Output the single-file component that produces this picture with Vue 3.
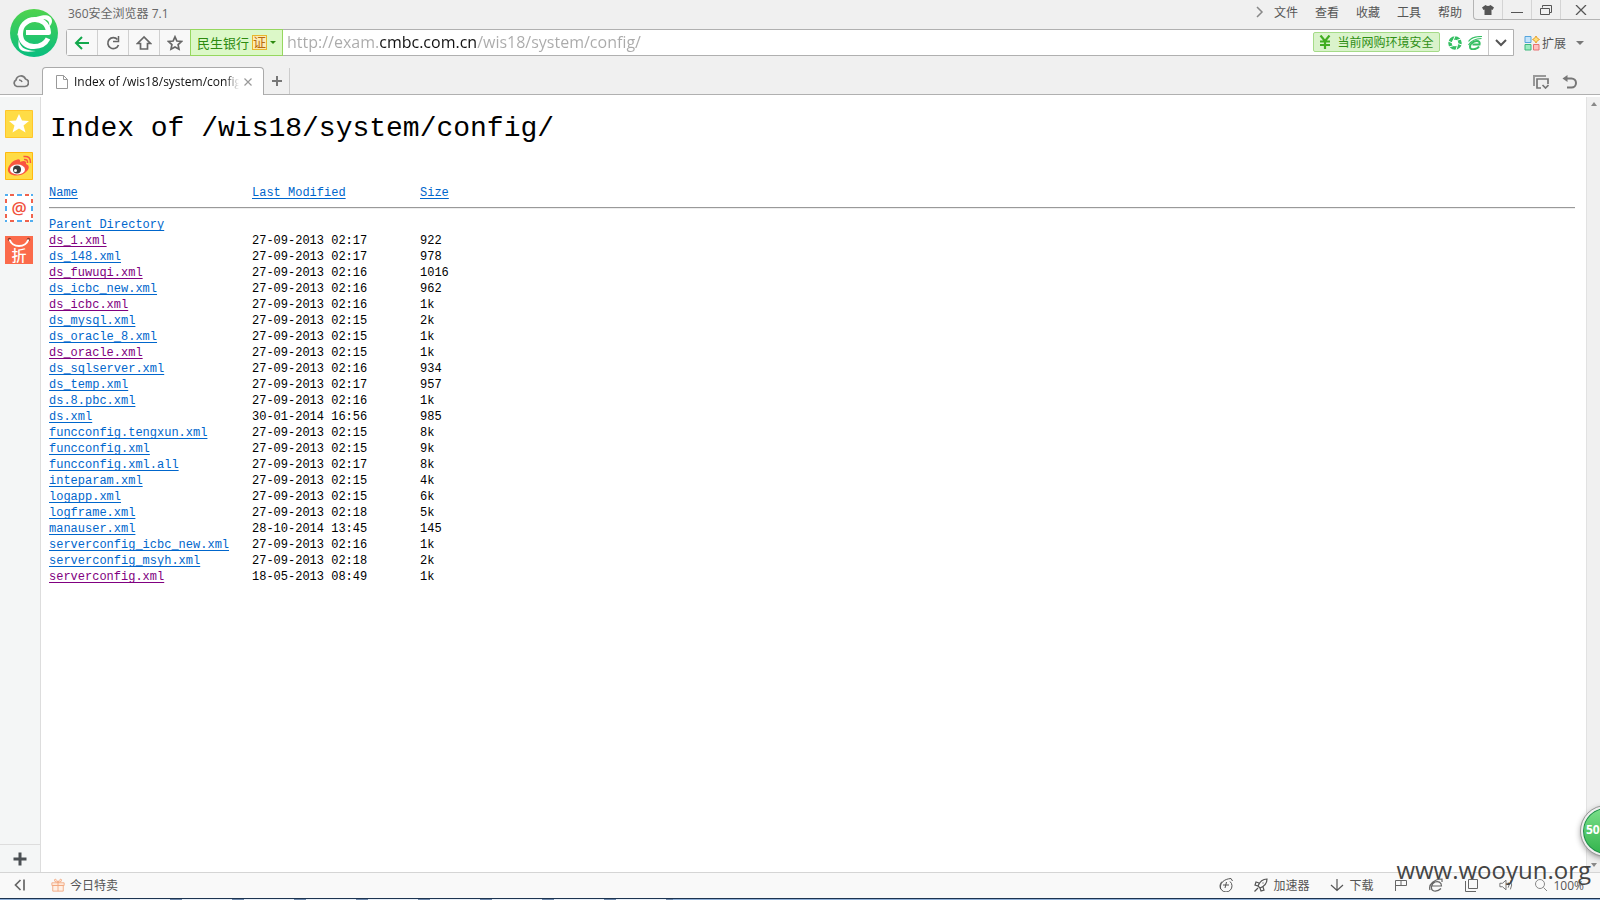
<script setup>
import { ref } from 'vue'

const url = ref('http://exam.cmbc.com.cn/wis18/system/config/')
const menus = ['文件', '查看', '收藏', '工具', '帮助']
const files = [
  ['ds_1.xml', '27-09-2013 02:17', '922', true],
  ['ds_148.xml', '27-09-2013 02:17', '978'],
  ['ds_fuwuqi.xml', '27-09-2013 02:16', '1016', true],
  ['ds_icbc_new.xml', '27-09-2013 02:16', '962'],
  ['ds_icbc.xml', '27-09-2013 02:16', '1k', true],
  ['ds_mysql.xml', '27-09-2013 02:15', '2k'],
  ['ds_oracle_8.xml', '27-09-2013 02:15', '1k'],
  ['ds_oracle.xml', '27-09-2013 02:15', '1k', true],
  ['ds_sqlserver.xml', '27-09-2013 02:16', '934'],
  ['ds_temp.xml', '27-09-2013 02:17', '957'],
  ['ds.8.pbc.xml', '27-09-2013 02:16', '1k'],
  ['ds.xml', '30-01-2014 16:56', '985'],
  ['funcconfig.tengxun.xml', '27-09-2013 02:15', '8k'],
  ['funcconfig.xml', '27-09-2013 02:15', '9k'],
  ['funcconfig.xml.all', '27-09-2013 02:17', '8k'],
  ['inteparam.xml', '27-09-2013 02:15', '4k'],
  ['logapp.xml', '27-09-2013 02:15', '6k'],
  ['logframe.xml', '27-09-2013 02:18', '5k'],
  ['manauser.xml', '28-10-2014 13:45', '145'],
  ['serverconfig_icbc_new.xml', '27-09-2013 02:16', '1k'],
  ['serverconfig_msyh.xml', '27-09-2013 02:18', '2k'],
  ['serverconfig.xml', '18-05-2013 08:49', '1k', true]
].map(([name, modified, size, visited]) => ({ name, modified, size, visited }))
</script>

<template>
  <div class="browser">
    <header class="top">
      <svg class="logo" viewBox="0 0 48 48" aria-hidden="true">
        <defs>
          <linearGradient id="lg" x1="0" y1="0" x2="0" y2="1">
            <stop offset="0" stop-color="#4fd34d" />
            <stop offset="1" stop-color="#08bd80" />
          </linearGradient>
        </defs>
        <circle cx="24" cy="24" r="24" fill="url(#lg)" />
        <path d="M16 23.500H38.500C38 14.500 31.500 10.500 25 10.500C15.500 10.500 10.500 17.500 10.500 25C10.500 33 16.500 37.500 24 37.500C30.500 37.500 35.500 34.500 38 29.500" fill="none" stroke="#fff" stroke-width="5" stroke-linejoin="round" />
        <path d="M7 27C9 17 18 9 32 6.500C37 5.500 42 7 42 12C42 14 41 16 39 18C40 13 38 10.500 33 10C24 9 14 16 7 27Z" fill="#fff" />
        <path d="M9 30C9 37 14 42 26 42C19 43 14 43 11 41C8 39 8 34 9 30Z" fill="#fff" />
      </svg>
      <div class="top-body">
        <div class="titlebar">
          <span class="app-name">360安全浏览器 7.1</span>
          <nav class="menus">
            <svg class="more" viewBox="0 0 8 12"><path d="M1 1l5 5-5 5" fill="none" stroke="#888" stroke-width="1.500" /></svg>
            <button v-for="m in menus" :key="m" type="button">{{ m }}</button>
          </nav>
          <div class="window-buttons">
            <button type="button" aria-label="皮肤"><svg viewBox="0 0 12 10"><path d="M3.500 0Q6 2 8.500 0L12 2.500L10.500 5L9.500 4.500V10H2.500V4.500L1.500 5L0 2.500Z" fill="#555" /></svg></button>
            <button type="button" aria-label="最小化"><svg viewBox="0 0 12 10"><path d="M0 7.500H12" stroke="#555" /></svg></button>
            <button type="button" aria-label="还原"><svg viewBox="0 0 12 10"><path d="M2.500 2.500V0.500H11.500V7.500H10M0.500 3.500H9.500V9.500H0.500Z" fill="none" stroke="#555" /></svg></button>
            <button type="button" aria-label="关闭" class="close"><svg viewBox="0 0 12 10"><path d="M1 0L11 10M11 0L1 10" stroke="#555" stroke-width="1.300" /></svg></button>
          </div>
        </div>
        <div class="toolbar">
          <div class="address">
            <button class="tool" type="button" aria-label="后退"><svg viewBox="0 0 16 16"><path d="M15 8H2M8 2L2 8L8 14" fill="none" stroke="#12a84c" stroke-width="2" /></svg></button>
            <button class="tool" type="button" aria-label="刷新"><svg viewBox="0 0 16 16"><path d="M12.500 4.500A5.500 5.500 0 1 0 13.500 10" fill="none" stroke="#666" stroke-width="1.700" /><path d="M13.500 1V6.500H8" fill="none" stroke="#666" stroke-width="1.500" /></svg></button>
            <button class="tool" type="button" aria-label="主页"><svg viewBox="0 0 16 16"><path d="M8 2L1.500 8.500H4.500V14H11.500V8.500H14.500Z" fill="none" stroke="#666" stroke-width="1.700" /></svg></button>
            <button class="tool last" type="button" aria-label="收藏本页"><svg viewBox="0 0 16 16"><path d="M8 1.800L9.900 6L14.500 6.500L11.100 9.600L12 14.200L8 12L4 14.200L4.900 9.600L1.500 6.500L6.100 6Z" fill="none" stroke="#666" stroke-width="1.700" /></svg></button>
            <button class="site" type="button">民生银行<span class="cert">证</span><span class="caret"></span></button>
            <input v-model="url" class="url" type="text" aria-label="地址" spellcheck="false" />
            <button class="safe" type="button">
              <svg viewBox="0 0 12 14"><path d="M1.500 0.500L6 6L10.500 0.500M1 6.500H11M1 10H11M6 6V14" fill="none" stroke="#42ad22" stroke-width="2.200" /></svg>
              当前网购环境安全
            </button>
            <button class="mode" type="button" aria-label="内核模式"><svg viewBox="0 0 14 14"><circle cx="7" cy="7" r="5" fill="none" stroke="#35bf63" stroke-width="3.500" /><path d="M7 0L5 5M13 3L8.500 4.500M14 9L9.500 7.500M8 14L9.500 9M1 11L6 9.500M0 5L4.500 7" stroke="#fff" /></svg></button>
            <button class="mode" type="button" aria-label="极速模式"><svg viewBox="0 0 14 14"><path d="M4.500 8.500H11.500C12 6 11 5 9 5C5 5 2 8 2 11C2 13.500 5 13.500 7 13C9 12.500 10.500 11.500 11 10.500" fill="none" stroke="#35bf63" stroke-width="2" /><path d="M0.500 5.500C3 1 8 0.500 14 0.500M0.500 9C4 3.500 9 2.500 13.500 2.500" fill="none" stroke="#35bf63" stroke-width="1.200" /></svg></button>
            <button class="drop" type="button" aria-label="历史地址"><svg viewBox="0 0 12 8"><path d="M1 1L6 6L11 1" fill="none" stroke="#555" stroke-width="2" /></svg></button>
          </div>
          <button class="ext" type="button">
            <svg viewBox="0 0 16 16"><path d="M1 1.500H7V7.500H1Z" fill="#c4e3fa" stroke="#55a5dc" /><path d="M1 9.500H7V15H1Z" fill="#9aebc0" stroke="#3cb77c" /><path d="M9.500 9.500H15V15H9.500Z" fill="#ffc0c0" stroke="#e57373" /><path d="M12 1L13.300 3.200L15.500 4.500L13.300 5.800L12 8L10.700 5.800L8.500 4.500L10.700 3.200Z" fill="#ffe07a" stroke="#e8a02c" /></svg>
            扩展<span class="caret"></span>
          </button>
        </div>
      </div>
    </header>

    <div class="tabs">
      <button class="cloud" type="button" aria-label="云同步"><svg viewBox="0 0 16 14"><path d="M4 12.500A3.500 3.500 0 0 1 3 6A5 5 0 0 1 12.500 5A3.800 3.800 0 0 1 12 12.500ZM6 6A3 3 0 0 1 9 8" fill="none" stroke="#777" stroke-width="1.700" /></svg></button>
      <div class="tab">
        <svg class="page-icon" viewBox="0 0 12 14"><path d="M0.500 0.500H7.500L11.500 4.500V13.500H0.500ZM7.500 0.500V4.500H11.500" fill="#fff" stroke="#999" /></svg>
        <span class="tab-title">Index of /wis18/system/config/</span>
        <button type="button" aria-label="关闭标签"><svg viewBox="0 0 8 8"><path d="M0.500 0.500L7.500 7.500M7.500 0.500L0.500 7.500" stroke="#999" stroke-width="1.200" /></svg></button>
      </div>
      <button class="new-tab" type="button" aria-label="新标签"><svg viewBox="0 0 10 10"><path d="M5 0V10M0 5H10" stroke="#777" stroke-width="2" /></svg></button>
      <div class="tab-tools">
        <button type="button" aria-label="标签列表"><svg viewBox="0 0 16 14"><path d="M1 11V1H13" fill="none" stroke="#999" stroke-width="2" /><path d="M8 13H4V4H15V9" fill="none" stroke="#777" stroke-width="1.700" /><path d="M9.500 10L12.500 13L15.500 10" fill="none" stroke="#777" stroke-width="1.700" /></svg></button>
        <button type="button" aria-label="恢复标签"><svg viewBox="0 0 16 14"><path d="M3 3.500H9.500A4.500 4.500 0 0 1 9.500 12.500H5" fill="none" stroke="#777" stroke-width="2" /><path d="M0.500 3.500L5.500 0V7Z" fill="#777" /></svg></button>
      </div>
    </div>

    <div class="middle">
      <aside class="side">
        <button type="button" aria-label="收藏夹"><svg viewBox="0 0 28 28"><path d="M0.500 0.500H27.500V27.500H0.500Z" fill="#ffdc46" stroke="#ffc62b" /><path d="M14 4L17 10.500L24 11L18.500 15.500L20.500 22.500L14 18.500L7.500 22.500L9.500 15.500L4 11L11 10.500Z" fill="#fff" /></svg></button>
        <button type="button" aria-label="微博"><svg viewBox="0 0 28 28"><path d="M0.500 0.500H27.500V27.500H0.500Z" fill="#ffdc46" stroke="#ffb90f" /><path d="M11 8C14 6 16 8 15 10C19 8 22 9 21 12C24 13 25 16 22 19C17 25 5 25 3 19C2 15 7 9 11 8Z" fill="#fa5540" /><ellipse cx="12.500" cy="17.500" rx="7.500" ry="5" fill="#fff" /><circle cx="12" cy="17.500" r="4" fill="#3c3c3c" /><circle cx="10.500" cy="18.500" r="1.500" fill="#fff" /><path d="M19 7.500Q23 7 22.500 11M18.500 4.500Q26 3.500 25.500 11" fill="none" stroke="#fa5540" stroke-width="1.500" /></svg></button>
        <button type="button" aria-label="邮箱"><svg viewBox="0 0 28 28"><path d="M0 0H28V28H0Z" fill="#fff" /><path d="M1 0V1M5 1H9M20 1H24M5 27H9M20 27H24M1 5V9M1 20V24M27 5V9M27 20V24" fill="none" stroke="#f0624c" stroke-width="2" /><path d="M0 1H3M12 1H17M26 1H28M0 27H2M12 27H17M25 27H28M1 12V17M27 12V17" fill="none" stroke="#50aef0" stroke-width="2" /><text x="14" y="20" text-anchor="middle" class="at">@</text></svg></button>
        <button type="button" aria-label="折扣"><svg viewBox="0 0 28 28"><path d="M0 0H28V28H0Z" fill="#fb6b4b" /><circle cx="4.500" cy="3.500" r="1.700" fill="#8f3523" /><circle cx="23.500" cy="3.500" r="1.700" fill="#8f3523" /><path d="M4.500 3.500Q7 10 14 10T23.500 3.500" fill="none" stroke="#fff" stroke-width="2" /><text x="14" y="25" text-anchor="middle" class="sale">折</text></svg></button>
        <button class="add" type="button" aria-label="添加"><svg viewBox="0 0 14 14"><path d="M7 0.500V13.500M0.500 7H13.500" stroke="#4b5054" stroke-width="3" /></svg></button>
      </aside>
      <main class="page">
        <h1>Index of /wis18/system/config/</h1>
        <table>
          <thead>
            <tr>
              <th class="name"><a href="#name">Name</a></th>
              <th class="date"><a href="#modified">Last Modified</a></th>
              <th><a href="#size">Size</a></th>
            </tr>
          </thead>
          <tbody>
            <tr><td colspan="3"><hr /></td></tr>
            <tr><td colspan="3"><a href="#parent">Parent Directory</a></td></tr>
            <tr v-for="f in files" :key="f.name">
              <td><a :href="'#' + f.name" :class="{ visited: f.visited }">{{ f.name }}</a></td>
              <td>{{ f.modified }}</td>
              <td>{{ f.size }}</td>
            </tr>
          </tbody>
        </table>
      </main>
      <div class="scroll"><span class="up"></span><span class="down"></span></div>
    </div>

    <footer class="status">
      <button class="collapse" type="button" aria-label="收起侧栏"><svg viewBox="0 0 12 12"><path d="M6.500 1L1.500 6L6.500 11M10 0.500V11.500" fill="none" stroke="#666" stroke-width="1.700" /></svg></button>
      <button type="button"><svg viewBox="0 0 16 16"><path d="M1 5.500H15V8.500H1ZM2 8.500H14V15H2ZM8 5.500V15M8 5Q3 4.500 4 2T8 5Q13 4.500 12 2T8 5" fill="#fff0e6" stroke="#f2a77e" /></svg>今日特卖</button>
      <div class="status-right">
        <button type="button" aria-label="加速球"><svg viewBox="0 0 14 14"><path d="M3 3.500A6 6 0 1 0 11 3.500M1.500 11C0.500 5 5 1 12 0.500L13.500 3M4 7H10M7.500 4L6 10" fill="none" stroke="#555" /></svg></button>
        <button type="button"><svg viewBox="0 0 14 14"><path d="M4 8C6 3 9 1 13 1C13 5 11 8 6 10ZM5 5L2 4L1 7L4 8M9 9L10 12L7 13L6 10M4 10L0.500 13.500M9 4.500V5.500" fill="none" stroke="#555" stroke-width="1.200" /></svg>加速器</button>
        <button type="button"><svg viewBox="0 0 14 14"><path d="M7 1V12.500M1 7L7 12.500L13 7" fill="none" stroke="#555" stroke-width="1.200" /></svg>下载</button>
        <button type="button" aria-label="标记"><svg viewBox="0 0 14 14"><path d="M1.500 13V2.500H12.500V7.500H1.500M7 2.500V7.500" fill="none" stroke="#666" /></svg></button>
        <button type="button" aria-label="浏览模式"><svg viewBox="0 0 14 14"><path d="M3 8H12.500C12.500 4 9 3 6 4C2 6 1 12 5 13C8 13.500 10 12.500 12 10.500M1 12C-1 6 6 1 13 1V4" fill="none" stroke="#666" stroke-width="1.200" /></svg></button>
        <button type="button" aria-label="窗口"><svg viewBox="0 0 14 14"><path d="M4.500 1.500H13.500V10.500H4.500ZM1.500 3V13.500H12" fill="none" stroke="#666" /></svg></button>
        <button type="button" aria-label="声音"><svg viewBox="0 0 16 14"><path d="M1 5H4L8 1.500V12.500L4 9H1ZM10.500 4Q12.500 7 10.500 10M13 2Q16 7 13 12" fill="none" stroke="#666" /></svg></button>
        <button type="button"><svg viewBox="0 0 14 14"><path d="M9.500 9.500L13 13M10.500 6A4.500 4.500 0 1 1 1.500 6A4.500 4.500 0 1 1 10.500 6Z" fill="none" stroke="#888" /></svg>100%</button>
      </div>
    </footer>
    <div class="desktop-edge"><span class="tasks"></span></div>
    <div class="ball">50</div>
    <div class="watermark">www.wooyun.org</div>
  </div>
</template>

<style>
body { overflow: hidden; }
</style>

<style scoped>
* { box-sizing: border-box; }
.browser {
  position: relative;
  display: flex;
  flex-direction: column;
  height: 100vh;
  overflow: hidden;
  background: #f0f0f0;
  color: #555;
  font-family: "Open Sans", "Noto Sans CJK SC", sans-serif;
  font-size: 12px;
}
button {
  display: flex;
  align-items: center;
  justify-content: center;
  margin: 0;
  padding: 0;
  border: 0;
  background: none;
  color: inherit;
  font: inherit;
  white-space: nowrap;
}
svg { display: block; flex: none; }
.top { display: flex; height: 56px; flex: none; }
.logo { width: 48px; height: 48px; margin: 9px 8px 0 10px; }
.top-body { flex: 1; min-width: 0; display: flex; flex-direction: column; }
.titlebar { display: flex; height: 29px; }
.app-name { padding-left: 2px; line-height: 27px; font-size: 12px; color: #666; }
.menus { display: flex; align-items: center; gap: 17px; height: 24px; margin-left: auto; padding-right: 11px; }
.more { width: 8px; height: 12px; margin-right: -7px; }
.window-buttons { display: flex; height: 20px; border: 1px solid #b4b4b4; border-width: 0 0 1px 1px; border-radius: 0 0 0 4px; }
.window-buttons button { width: 29px; border-right: 1px solid #d4d4d4; }
.window-buttons svg { width: 12px; height: 10px; }
.window-buttons .close { width: 39px; border-right: 0; }
.toolbar { display: flex; height: 27px; }
.address { display: flex; align-items: stretch; flex: 1; min-width: 0; border: 1px solid #b0b0b0; border-radius: 3px 0 0 3px; background: #fff; }
.tool { width: 31px; border-right: 1px solid #d0d0d0; background: #f8f8f8; }
.tool.last { width: 30px; border-right: 0; }
.tool svg { width: 16px; height: 16px; }
.site { width: 93px; margin: -1px 0; border: 1px solid #96d75f; background: #dcf8c8; color: #2d8a10; font-size: 13px; }
.cert { margin: 0 3px; border: 1px solid #e8b62c; background: #fdebb0; color: #b86a10; line-height: 13px; }
.caret { width: 0; height: 0; border: 3px solid transparent; border-top-color: currentColor; border-bottom: 0; }
.url {
  flex: 1;
  min-width: 0;
  padding: 0 0 2px 4px;
  border: 0;
  outline: 0;
  background: linear-gradient(90deg, #aaa 95px, #111 95px, #111 194px, #aaa 194px);
  background-clip: text;
  -webkit-background-clip: text;
  color: transparent;
  font: 16px "Open Sans", sans-serif;
}
.safe { gap: 6px; width: 127px; height: 20px; margin: 2px 8px 0 0; border: 1px solid #a5db88; border-radius: 2px; background: #daf3cb; color: #2f8f16; }
.safe svg { width: 12px; height: 14px; }
.mode { width: 14px; margin-right: 6px; }
.mode svg { width: 14px; height: 14px; }
.drop { width: 25px; border-left: 1px solid #c8c8c8; }
.drop svg { width: 12px; height: 8px; }
.ext { width: 86px; padding-right: 6px; }
.ext svg { width: 16px; height: 16px; margin-right: 2px; }
.ext .caret { margin-left: 10px; border-width: 4px 4px 0; color: #777; }
.tabs { display: flex; align-items: flex-end; flex: none; height: 39px; border-bottom: 1px solid #b0b0b0; }
.cloud { width: 42px; height: 26px; }
.cloud svg { width: 16px; height: 14px; }
.tab { display: flex; align-items: center; width: 222px; height: 28px; margin-bottom: -1px; padding: 0 11px 0 13px; border: 1px solid #aaa; border-bottom: 0; border-radius: 4px 4px 0 0; background: #fff; color: #111; }
.page-icon { width: 12px; height: 14px; margin-right: 6px; }
.tab-title { flex: 1; overflow: hidden; white-space: nowrap; font-size: 12px; -webkit-mask-image: linear-gradient(90deg, #000 92%, transparent); mask-image: linear-gradient(90deg, #000 92%, transparent); }
.tab button { margin-left: 5px; }
.tab button svg { width: 8px; height: 8px; }
.new-tab { width: 26px; height: 26px; border-right: 1px solid #ccc; }
.new-tab svg { width: 10px; height: 10px; }
.tab-tools { display: flex; gap: 13px; margin-left: auto; padding: 0 22px 5px 0; }
.tab-tools svg { width: 16px; height: 14px; }
.middle { display: flex; flex: 1; min-height: 0; background: #fff; }
.side { display: flex; flex-direction: column; align-items: flex-start; gap: 14px; width: 41px; margin-top: 2px; padding: 13px 0 0; border-right: 1px solid #ddd; background: #f4f6f6; }
.side > button { margin-left: 5px; }
.side > button svg { width: 28px; height: 28px; }
.side > .add { width: 40px; height: 28px; margin: auto 0 0; border-top: 1px solid #ddd; }
.side > .add svg { width: 14px; height: 14px; }
.at { fill: #f0503c; font: 600 17px "Open Sans", sans-serif; }
.sale { fill: #fff; font: 500 15px "Noto Sans CJK SC", sans-serif; }
.page { flex: 1; min-width: 0; padding: 14px 11px 0 8px; color: #000; font-family: "Liberation Mono", monospace; }
h1 { margin: 0 0 36px 1px; font-size: 28px; line-height: 40px; font-weight: 400; }
table { width: 100%; border-collapse: collapse; table-layout: fixed; font-size: 12px; line-height: 16px; }
th, td { height: 16px; padding: 0; text-align: left; font-weight: 400; white-space: nowrap; }
.name { width: 203px; }
.date { width: 168px; }
hr { margin: 6px 0 8px; border: 0; border-top: 1px solid #999; border-bottom: 1px solid #eee; }
.page a { color: #0066cc; text-decoration: underline; text-underline-offset: 2px; }
.page a.visited { color: #800080; }
.scroll { display: flex; flex-direction: column; justify-content: space-between; align-items: center; width: 14px; margin-top: 2px; padding: 5px 0; border-left: 1px solid #e2e2e2; background: #f0f0f0; }
.up, .down { border: 3px solid transparent; }
.up { border-top: 0; border-bottom: 4px solid #888; }
.down { border-bottom: 0; border-top: 4px solid #888; }
.status { display: flex; flex: none; height: 26px; padding-bottom: 1px; border-top: 1px solid #d5d5d5; background: #f9f9f9; }
.status svg { width: 14px; height: 14px; }
.status button { gap: 5px; }
.status .collapse { width: 40px; margin-right: 11px; }
.status .collapse svg { width: 12px; height: 12px; }
.status-right { display: flex; gap: 21px; margin-left: auto; padding-right: 16px; }
.desktop-edge { flex: none; height: 2px; padding-left: 120px; border-top: 1px solid #1d3450; background: #8fb0d8; }
.tasks { display: block; width: 553px; height: 1px; background: repeating-linear-gradient(90deg, #e8f0fa 0, #e8f0fa 50px, #6d87ab 50px, #6d87ab 62px); }
.ball { position: absolute; right: -31px; bottom: 44px; width: 50px; height: 50px; padding-left: 3px; border: 2px solid #eee; border-radius: 50%; outline: 1px solid #999; background: linear-gradient(#7be08a, #32b34c); box-shadow: inset 0 0 0 1px #1e8a4c, 0 2px 6px #888; color: #fff; font-size: 12px; font-weight: 700; line-height: 44px; }
.watermark { position: absolute; right: 9px; bottom: 13px; color: #444; font-size: 24px; line-height: 34px; }
</style>
